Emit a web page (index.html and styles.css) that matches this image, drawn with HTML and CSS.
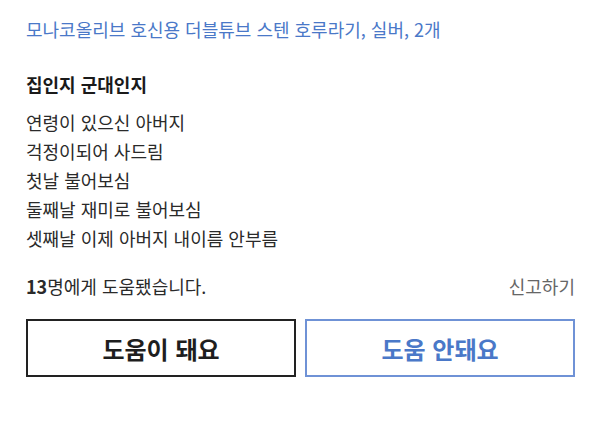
FILE: index.html
```html
<!DOCTYPE html>
<html lang="ko">
<head>
<meta charset="utf-8">
<link rel="stylesheet" href="styles.css">
</head>
<body>
<div class="review">
  <div class="product">모나코올리브 호신용 더블튜브 스텐 호루라기, 실버, 2개</div>
  <div class="headline">집인지 군대인지</div>
  <div class="content">
    <div>연령이 있으신 아버지</div>
    <div>걱정이되어 사드림</div>
    <div>첫날 불어보심</div>
    <div>둘째날 재미로 불어보심</div>
    <div>셋째날 이제 아버지 내이름 안부름</div>
  </div>
  <div class="meta">
    <span class="helpful"><b>13</b>명에게 도움됐습니다.</span>
    <span class="report">신고하기</span>
  </div>
  <div class="buttons">
    <button class="btn yes">도움이 돼요</button>
    <button class="btn no">도움 안돼요</button>
  </div>
</div>
</body>
</html>
```
FILE: styles.css
```css
html, body {
  margin: 0;
  padding: 0;
  background: #fff;
}
body {
  font-family: "Noto Sans CJK KR", "Noto Sans", sans-serif;
  color: #222;
}
.review {
  padding: 15px 25px 0 26px;
}
.product {
  font-size: 18px;
  line-height: 29px;
  color: #4a78c8;
}
.headline {
  margin-top: 26px;
  font-size: 18px;
  line-height: 29px;
  font-weight: 700;
  color: #1a1a1a;
}
.content {
  margin-top: 9px;
  font-size: 18px;
  line-height: 29px;
  color: #2a2a2a;
}
.meta {
  margin-top: 19px;
  display: flex;
  justify-content: space-between;
  font-size: 18px;
  line-height: 29px;
}
.helpful {
  color: #2a2a2a;
}
.helpful b {
  font-weight: 700;
}
.report {
  color: #666;
}
.buttons {
  margin-top: 18px;
  display: grid;
  grid-template-columns: 1fr 1fr;
  gap: 9px;
}
.btn {
  height: 58px;
  background: #fff;
  font-family: inherit;
  font-size: 24px;
  font-weight: 700;
  padding: 0;
}
.btn.yes {
  border: 2px solid #222;
  color: #1e1e1e;
}
.btn.no {
  border: 2px solid #6f92d6;
  color: #4a78c8;
}
```
